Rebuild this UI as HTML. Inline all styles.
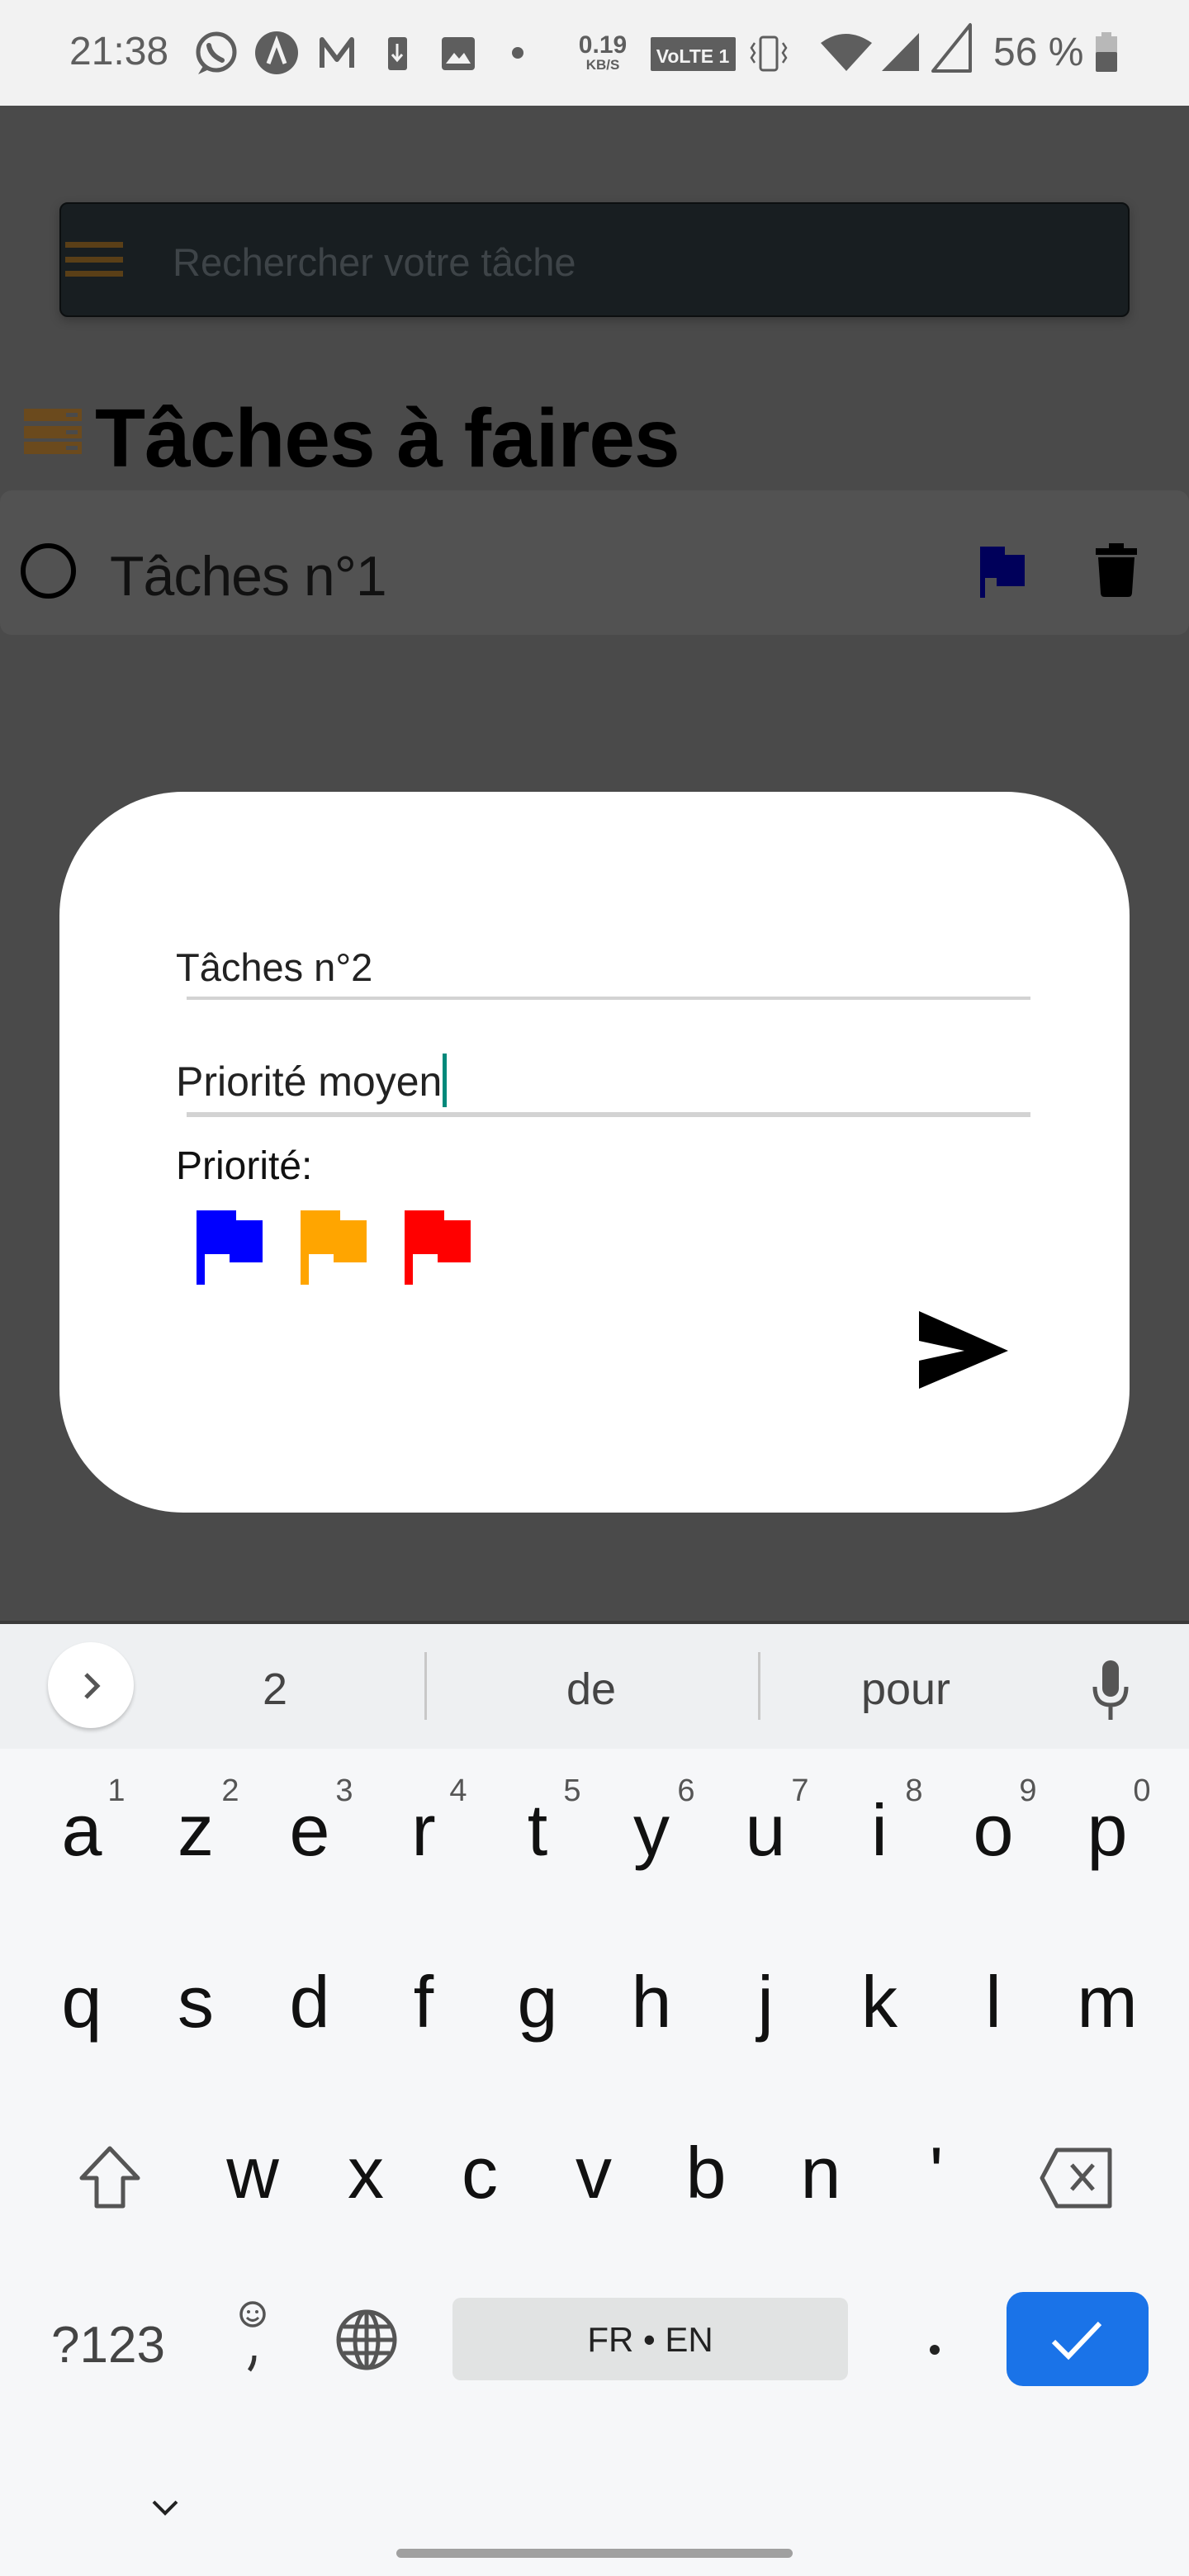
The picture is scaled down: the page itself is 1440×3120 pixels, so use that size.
<!DOCTYPE html>
<html><head><meta charset="utf-8">
<style>
*{margin:0;padding:0;box-sizing:border-box}
body{width:1440px;height:3120px;position:relative;overflow:hidden;background:#4a4a4a;font-family:"Liberation Sans",sans-serif}
.a{position:absolute;line-height:1;white-space:nowrap}
</style></head><body>
<!-- status bar -->
<div class="a" style="left:0;top:0;width:1440px;height:128px;background:#f2f2f2"></div>
<div class="a" style="left:84px;top:39px;font-size:48px;color:#5e5e5e">21:38</div>
<svg class="a" style="left:0;top:0" width="1440" height="128">
 <g fill="#5e5e5e" stroke="#5e5e5e">
  <circle cx="262" cy="63" r="22" fill="none" stroke-width="5"/>
  <path d="M246 80 L240 90 L253 84" fill="#5e5e5e" stroke="none"/>
  <path d="M253 55 q2 12 16 18" fill="none" stroke-width="6" stroke-linecap="round"/>
  <circle cx="335" cy="64" r="26" stroke="none"/>
  <path d="M325 77 L335 50 L345 77" fill="none" stroke="#f2f2f2" stroke-width="5"/>
  <path d="M390 82 V48 L408 72 L426 48 V82" fill="none" stroke-width="6" stroke-linejoin="round"/>
  <rect x="470" y="45" width="23" height="40" rx="3" stroke="none"/>
  <path d="M481 53 V72 M475 66 L481 73 L487 66" stroke="#f2f2f2" stroke-width="3" fill="none"/>
  <rect x="535" y="45" width="40" height="40" rx="4" stroke="none"/>
  <path d="M540 77 L550 64 L556 71 L562 64 L570 77Z" fill="#f2f2f2" stroke="none"/>
  <circle cx="627" cy="64" r="7" stroke="none"/>
  <rect x="788" y="45" width="103" height="41" rx="2" stroke="none"/>
  <rect x="921" y="45" width="20" height="40" rx="3" fill="none" stroke-width="3"/>
  <path d="M914 52 l-4 6 4 6 -4 6 4 6 M948 52 l4 6 -4 6 4 6 -4 6" fill="none" stroke-width="2.5"/>
  <path d="M994 52 Q1024 30 1056 52 L1025 86Z" stroke="none"/>
  <path d="M1113 40 V86 H1068Z" stroke="none"/>
  <path d="M1175 30 V86 H1130Z" fill="none" stroke-width="4" stroke-linejoin="round"/>
  <rect x="1327" y="44" width="26" height="22" fill="#b8b8b8" stroke="none"/>
  <rect x="1334" y="39" width="12" height="6" fill="#b8b8b8" stroke="none"/>
  <rect x="1327" y="63" width="26" height="24" rx="2" stroke="none"/>
 </g>
 <text x="730" y="64" font-size="30" font-weight="bold" fill="#5e5e5e" text-anchor="middle" font-family="Liberation Sans">0.19</text>
 <text x="730" y="84" font-size="17" font-weight="bold" fill="#5e5e5e" text-anchor="middle" font-family="Liberation Sans">KB/S</text>
 <text x="839" y="76" font-size="23" font-weight="bold" fill="#f2f2f2" text-anchor="middle" font-family="Liberation Sans">VoLTE 1</text>
</svg>
<div class="a" style="left:1203px;top:40px;font-size:48px;color:#5e5e5e">56 %</div>

<!-- search bar -->
<div class="a" style="left:72px;top:245px;width:1296px;height:139px;background:#181e21;border:2px solid #0c0f10;border-radius:10px;box-shadow:0 4px 12px rgba(0,0,0,.25)"></div>
<div class="a" style="left:79px;top:293px;width:70px;height:7px;background:#5a3f17"></div>
<div class="a" style="left:79px;top:311px;width:70px;height:7px;background:#5a3f17"></div>
<div class="a" style="left:79px;top:328px;width:70px;height:7px;background:#5a3f17"></div>
<div class="a" style="left:209px;top:294px;font-size:47px;color:#3e4448">Rechercher votre tâche</div>

<!-- title -->
<div class="a" style="left:29px;top:495px;width:70px;height:15px;background:#6b4a1d"></div>
<div class="a" style="left:29px;top:516px;width:70px;height:15px;background:#6b4a1d"></div>
<div class="a" style="left:29px;top:535px;width:70px;height:15px;background:#6b4a1d"></div>
<div class="a" style="left:80px;top:500px;width:14px;height:5px;background:#4a4a4a"></div>
<div class="a" style="left:80px;top:521px;width:14px;height:5px;background:#4a4a4a"></div>
<div class="a" style="left:80px;top:540px;width:14px;height:5px;background:#4a4a4a"></div>
<div class="a" style="left:115px;top:481px;font-size:100px;font-weight:bold;color:#000;letter-spacing:-1px">Tâches à faires</div>

<!-- task card -->
<div class="a" style="left:0;top:594px;width:1440px;height:175px;background:#525252;border-radius:14px"></div>
<div class="a" style="left:25px;top:658px;width:67px;height:67px;border:6px solid #000;border-radius:50%"></div>
<div class="a" style="left:133px;top:664px;font-size:68px;color:#111;letter-spacing:-1px">Tâches n°1</div>
<svg class="a" style="left:1185px;top:660px" width="60" height="64"><path d="M2 2 H32 V12 H56 V50 H22 V40 H8 V64 H2Z" fill="#00005a"/></svg>
<svg class="a" style="left:1325px;top:658px" width="54" height="66"><rect x="2" y="6" width="50" height="8" fill="#000"/><rect x="18" y="0" width="18" height="8" fill="#000"/><path d="M5 17 H49 L46 60 Q46 65 41 65 H13 Q8 65 8 60Z" fill="#000"/></svg>

<!-- dialog -->
<div class="a" style="left:72px;top:959px;width:1296px;height:873px;background:#fff;border-radius:150px"></div>
<div class="a" style="left:213px;top:1148px;font-size:47px;color:#222">Tâches n°2</div>
<div class="a" style="left:226px;top:1207px;width:1022px;height:4px;background:#d3d3d3"></div>
<div class="a" style="left:213px;top:1285px;font-size:50px;color:#222">Priorité moyen</div>
<div class="a" style="left:536px;top:1276px;width:5px;height:65px;background:#00897b"></div>
<div class="a" style="left:226px;top:1347px;width:1022px;height:6px;background:#d3d3d3"></div>
<div class="a" style="left:213px;top:1389px;font-size:48px;color:#111">Priorité:</div>
<svg class="a" style="left:236px;top:1466px" width="340" height="92">
 <path d="M2 0 H50 V12 H82 V63 H42 V53 H12 V90 H2Z" fill="#0000ff"/>
 <path d="M128 0 H176 V12 H208 V63 H168 V53 H138 V90 H128Z" fill="#ffa500"/>
 <path d="M254 0 H302 V12 H334 V63 H294 V53 H264 V90 H254Z" fill="#ff0000"/>
</svg>
<svg class="a" style="left:1110px;top:1586px" width="114" height="98"><path d="M3 2 L111 50 L3 96 V62 L58 50 L3 38Z" fill="#000"/></svg>

<!-- keyboard -->
<div class="a" style="left:0;top:1963px;width:1440px;height:1157px;background:#f6f7f9"></div>
<div class="a" style="left:0;top:1963px;width:1440px;height:4px;background:#3a3a3a"></div>
<div class="a" style="left:0;top:1967px;width:1440px;height:151px;background:#eef0f2"></div>
<div class="a" style="left:58px;top:1989px;width:104px;height:104px;border-radius:50%;background:#fff;box-shadow:0 3px 5px rgba(0,0,0,.2)"></div>
<svg class="a" style="left:96px;top:2024px" width="30" height="36"><path d="M8 4 L22 18 L8 32" stroke="#555" stroke-width="5" fill="none"/></svg>
<div class="a" style="left:0;top:2019px;width:666px;text-align:center;font-size:54px;color:#444">2</div>
<div class="a" style="left:516px;top:2019px;width:400px;text-align:center;font-size:54px;color:#444">de</div>
<div class="a" style="left:920px;top:2019px;width:354px;text-align:center;font-size:54px;color:#444">pour</div>
<div class="a" style="left:514px;top:2001px;width:3px;height:82px;background:#c8c8c8"></div>
<div class="a" style="left:918px;top:2001px;width:3px;height:82px;background:#c8c8c8"></div>
<svg class="a" style="left:1318px;top:2007px" width="54" height="80"><rect x="17" y="4" width="20" height="44" rx="10" fill="#555"/><path d="M8 36 Q8 58 27 58 Q46 58 46 36 M27 58 V76" stroke="#555" stroke-width="5" fill="none"/></svg>

<div style="position:absolute;left:0;top:0;font-size:88px;color:#111">
<div class="a" style="left:59px;top:2173px;width:80px;text-align:center">a</div>
<div class="a" style="left:197px;top:2173px;width:80px;text-align:center">z</div>
<div class="a" style="left:335px;top:2173px;width:80px;text-align:center">e</div>
<div class="a" style="left:473px;top:2173px;width:80px;text-align:center">r</div>
<div class="a" style="left:611px;top:2173px;width:80px;text-align:center">t</div>
<div class="a" style="left:749px;top:2173px;width:80px;text-align:center">y</div>
<div class="a" style="left:887px;top:2173px;width:80px;text-align:center">u</div>
<div class="a" style="left:1025px;top:2173px;width:80px;text-align:center">i</div>
<div class="a" style="left:1163px;top:2173px;width:80px;text-align:center">o</div>
<div class="a" style="left:1301px;top:2173px;width:80px;text-align:center">p</div>
<div class="a" style="left:59px;top:2381px;width:80px;text-align:center">q</div>
<div class="a" style="left:197px;top:2381px;width:80px;text-align:center">s</div>
<div class="a" style="left:335px;top:2381px;width:80px;text-align:center">d</div>
<div class="a" style="left:473px;top:2381px;width:80px;text-align:center">f</div>
<div class="a" style="left:611px;top:2381px;width:80px;text-align:center">g</div>
<div class="a" style="left:749px;top:2381px;width:80px;text-align:center">h</div>
<div class="a" style="left:887px;top:2381px;width:80px;text-align:center">j</div>
<div class="a" style="left:1025px;top:2381px;width:80px;text-align:center">k</div>
<div class="a" style="left:1163px;top:2381px;width:80px;text-align:center">l</div>
<div class="a" style="left:1301px;top:2381px;width:80px;text-align:center">m</div>
<div class="a" style="left:266px;top:2588px;width:80px;text-align:center">w</div>
<div class="a" style="left:403px;top:2588px;width:80px;text-align:center">x</div>
<div class="a" style="left:541px;top:2588px;width:80px;text-align:center">c</div>
<div class="a" style="left:679px;top:2588px;width:80px;text-align:center">v</div>
<div class="a" style="left:815px;top:2588px;width:80px;text-align:center">b</div>
<div class="a" style="left:954px;top:2588px;width:80px;text-align:center">n</div>
<div class="a" style="left:1094px;top:2588px;width:80px;text-align:center">'</div>
</div>
<div style="position:absolute;left:0;top:0;font-size:38px;color:#555">
<div class="a" style="left:121px;top:2150px;width:40px;text-align:center">1</div>
<div class="a" style="left:259px;top:2150px;width:40px;text-align:center">2</div>
<div class="a" style="left:397px;top:2150px;width:40px;text-align:center">3</div>
<div class="a" style="left:535px;top:2150px;width:40px;text-align:center">4</div>
<div class="a" style="left:673px;top:2150px;width:40px;text-align:center">5</div>
<div class="a" style="left:811px;top:2150px;width:40px;text-align:center">6</div>
<div class="a" style="left:949px;top:2150px;width:40px;text-align:center">7</div>
<div class="a" style="left:1087px;top:2150px;width:40px;text-align:center">8</div>
<div class="a" style="left:1225px;top:2150px;width:40px;text-align:center">9</div>
<div class="a" style="left:1363px;top:2150px;width:40px;text-align:center">0</div>
</div>
<svg class="a" style="left:95px;top:2598px" width="80" height="80"><path d="M38 4 L72 40 H54 V74 H22 V40 H4Z" fill="none" stroke="#555" stroke-width="5" stroke-linejoin="round"/></svg>
<svg class="a" style="left:1258px;top:2600px" width="92" height="76"><path d="M22 4 H86 V72 H22 L4 38Z" fill="none" stroke="#555" stroke-width="5" stroke-linejoin="round"/><path d="M40 22 L66 52 M66 22 L40 52" stroke="#555" stroke-width="5"/></svg>
<div class="a" style="left:62px;top:2810px;font-size:62px;color:#444">?123</div>
<svg class="a" style="left:284px;top:2781px" width="44" height="100"><circle cx="22" cy="22" r="14" fill="none" stroke="#555" stroke-width="3.5"/><circle cx="17" cy="19" r="2" fill="#555"/><circle cx="27" cy="19" r="2" fill="#555"/><path d="M15 26 Q22 33 29 26" fill="none" stroke="#555" stroke-width="3"/><path d="M24 72 Q24 82 18 90" stroke="#333" stroke-width="5" fill="none"/></svg>
<svg class="a" style="left:404px;top:2794px" width="80" height="80"><g fill="none" stroke="#555" stroke-width="5"><circle cx="40" cy="40" r="34"/><ellipse cx="40" cy="40" rx="14" ry="34"/><path d="M6 40 H74 M12 24 H68 M12 56 H68 M40 6 V74"/></g></svg>
<div class="a" style="left:548px;top:2783px;width:479px;height:100px;background:#e1e3e3;border-radius:10px"></div>
<div class="a" style="left:548px;top:2813px;width:479px;text-align:center;font-size:42px;color:#222">FR • EN</div>
<div class="a" style="left:1126px;top:2840px;width:12px;height:12px;border-radius:50%;background:#222"></div>
<div class="a" style="left:1219px;top:2776px;width:172px;height:114px;background:#1a73e8;border-radius:20px"></div>
<svg class="a" style="left:1270px;top:2806px" width="70" height="56"><path d="M6 30 L24 48 L62 8" fill="none" stroke="#fff" stroke-width="6"/></svg>
<svg class="a" style="left:182px;top:3026px" width="36" height="24"><path d="M4 4 L18 18 L32 4" fill="none" stroke="#222" stroke-width="4"/></svg>
<div class="a" style="left:480px;top:3087px;width:480px;height:11px;border-radius:6px;background:#a0a0a0"></div>
</body></html>
